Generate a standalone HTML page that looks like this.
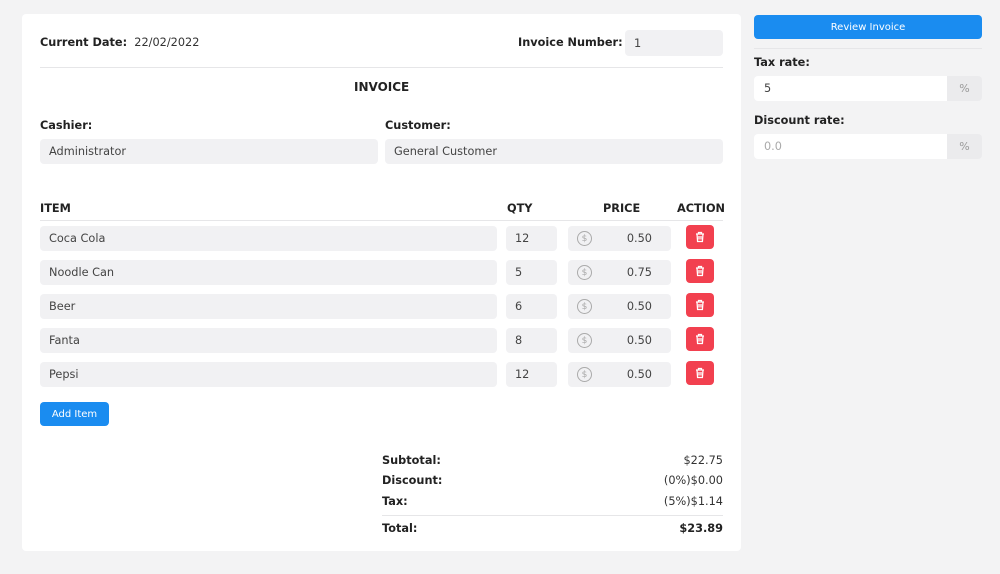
<!DOCTYPE html>
<html><head><style>
*{box-sizing:border-box;margin:0;padding:0}
body{width:1000px;height:574px;background:#f3f3f4;font-family:"DejaVu Sans","Liberation Sans",sans-serif;font-size:11.3px;color:#333;position:relative;overflow:hidden}
.a{position:absolute}
.card{left:22px;top:14px;width:719px;height:537px;background:#fff;border-radius:4px}
.b{font-weight:bold;color:#222}
.in{background:#f1f1f3;border-radius:4px;padding-left:9px;display:flex;align-items:center;color:#444}
.hr{height:1px;background:#e6e6e8}
.del{background:#f2404f;border-radius:4px;display:flex;align-items:center;justify-content:center}
.btn{background:#1a8cf0;color:#fff;border-radius:4px;display:flex;align-items:center;justify-content:center;font-size:10px}
.r{text-align:right}
.cur{width:15px;height:15px;border:1.5px solid #aaa;border-radius:50%;color:#aaa;font-size:9px;display:flex;align-items:center;justify-content:center}
.pc{width:35px;height:25px;background:#ebebed;border-radius:0 4px 4px 0;color:#999;font-size:11px;display:flex;align-items:center;justify-content:center}
</style></head><body>
<div class="a card"></div>
<div class="a" style="left:40px;top:36px"><span class="b">Current Date:</span>&nbsp; 22/02/2022</div>
<div class="a b" style="left:518px;top:36px">Invoice Number:</div>
<div class="a in" style="left:625px;top:30px;width:98px;height:26px">1</div>
<div class="a hr" style="left:40px;top:67px;width:683px"></div>
<div class="a b" style="left:354px;top:80px;font-size:12px">INVOICE</div>
<div class="a b" style="left:40px;top:119px">Cashier:</div>
<div class="a b" style="left:385px;top:119px">Customer:</div>
<div class="a in" style="left:40px;top:139px;width:338px;height:25px">Administrator</div>
<div class="a in" style="left:385px;top:139px;width:338px;height:25px">General Customer</div>
<div class="a b" style="left:40px;top:202px">ITEM</div>
<div class="a b" style="left:507px;top:202px">QTY</div>
<div class="a b" style="left:603px;top:202px">PRICE</div>
<div class="a b" style="left:677px;top:202px">ACTION</div>
<div class="a hr" style="left:40px;top:220px;width:683px"></div>

<div class="a in" style="left:40px;top:226px;width:457px;height:25px">Coca Cola</div>
<div class="a in" style="left:506px;top:226px;width:51px;height:25px">12</div>
<div class="a in" style="left:568px;top:226px;width:103px;height:25px;justify-content:space-between;padding-right:19px"><div class="cur">$</div>0.50</div>
<div class="a del" style="left:686px;top:225px;width:28px;height:24px"><svg width="12" height="12" viewBox="0 0 12 12" fill="none" stroke="#fff" stroke-width="1.3"><path d="M2 3h8M4.5 3V1.5h3V3M3 3l.6 7.5h4.8L9 3M5 5v3.5M7 5v3.5"/></svg></div>

<div class="a in" style="left:40px;top:260px;width:457px;height:25px">Noodle Can</div>
<div class="a in" style="left:506px;top:260px;width:51px;height:25px">5</div>
<div class="a in" style="left:568px;top:260px;width:103px;height:25px;justify-content:space-between;padding-right:19px"><div class="cur">$</div>0.75</div>
<div class="a del" style="left:686px;top:259px;width:28px;height:24px"><svg width="12" height="12" viewBox="0 0 12 12" fill="none" stroke="#fff" stroke-width="1.3"><path d="M2 3h8M4.5 3V1.5h3V3M3 3l.6 7.5h4.8L9 3M5 5v3.5M7 5v3.5"/></svg></div>

<div class="a in" style="left:40px;top:294px;width:457px;height:25px">Beer</div>
<div class="a in" style="left:506px;top:294px;width:51px;height:25px">6</div>
<div class="a in" style="left:568px;top:294px;width:103px;height:25px;justify-content:space-between;padding-right:19px"><div class="cur">$</div>0.50</div>
<div class="a del" style="left:686px;top:293px;width:28px;height:24px"><svg width="12" height="12" viewBox="0 0 12 12" fill="none" stroke="#fff" stroke-width="1.3"><path d="M2 3h8M4.5 3V1.5h3V3M3 3l.6 7.5h4.8L9 3M5 5v3.5M7 5v3.5"/></svg></div>

<div class="a in" style="left:40px;top:328px;width:457px;height:25px">Fanta</div>
<div class="a in" style="left:506px;top:328px;width:51px;height:25px">8</div>
<div class="a in" style="left:568px;top:328px;width:103px;height:25px;justify-content:space-between;padding-right:19px"><div class="cur">$</div>0.50</div>
<div class="a del" style="left:686px;top:327px;width:28px;height:24px"><svg width="12" height="12" viewBox="0 0 12 12" fill="none" stroke="#fff" stroke-width="1.3"><path d="M2 3h8M4.5 3V1.5h3V3M3 3l.6 7.5h4.8L9 3M5 5v3.5M7 5v3.5"/></svg></div>

<div class="a in" style="left:40px;top:362px;width:457px;height:25px">Pepsi</div>
<div class="a in" style="left:506px;top:362px;width:51px;height:25px">12</div>
<div class="a in" style="left:568px;top:362px;width:103px;height:25px;justify-content:space-between;padding-right:19px"><div class="cur">$</div>0.50</div>
<div class="a del" style="left:686px;top:361px;width:28px;height:24px"><svg width="12" height="12" viewBox="0 0 12 12" fill="none" stroke="#fff" stroke-width="1.3"><path d="M2 3h8M4.5 3V1.5h3V3M3 3l.6 7.5h4.8L9 3M5 5v3.5M7 5v3.5"/></svg></div>

<div class="a btn" style="left:40px;top:402px;width:69px;height:24px">Add Item</div>

<div class="a b" style="left:382px;top:454px">Subtotal:</div><div class="a r" style="left:600px;width:123px;top:454px">$22.75</div>
<div class="a b" style="left:382px;top:474px">Discount:</div><div class="a r" style="left:600px;width:123px;top:474px">(0%)$0.00</div>
<div class="a b" style="left:382px;top:495px">Tax:</div><div class="a r" style="left:600px;width:123px;top:495px">(5%)$1.14</div>
<div class="a hr" style="left:382px;top:515px;width:341px"></div>
<div class="a b" style="left:382px;top:522px">Total:</div><div class="a r b" style="left:600px;width:123px;top:522px">$23.89</div>

<div class="a btn" style="left:754px;top:15px;width:228px;height:24px">Review Invoice</div>
<div class="a hr" style="left:754px;top:48px;width:228px"></div>
<div class="a b" style="left:754px;top:56px">Tax rate:</div>
<div class="a" style="left:754px;top:76px;width:194px;height:25px;background:#fff;border-radius:4px 0 0 4px;padding:6px 10px;color:#444">5</div>
<div class="a pc" style="left:947px;top:76px">%</div>
<div class="a b" style="left:754px;top:114px">Discount rate:</div>
<div class="a" style="left:754px;top:134px;width:194px;height:25px;background:#fff;border-radius:4px 0 0 4px;padding:6px 10px;color:#aaa">0.0</div>
<div class="a pc" style="left:947px;top:134px">%</div>
</body></html>
